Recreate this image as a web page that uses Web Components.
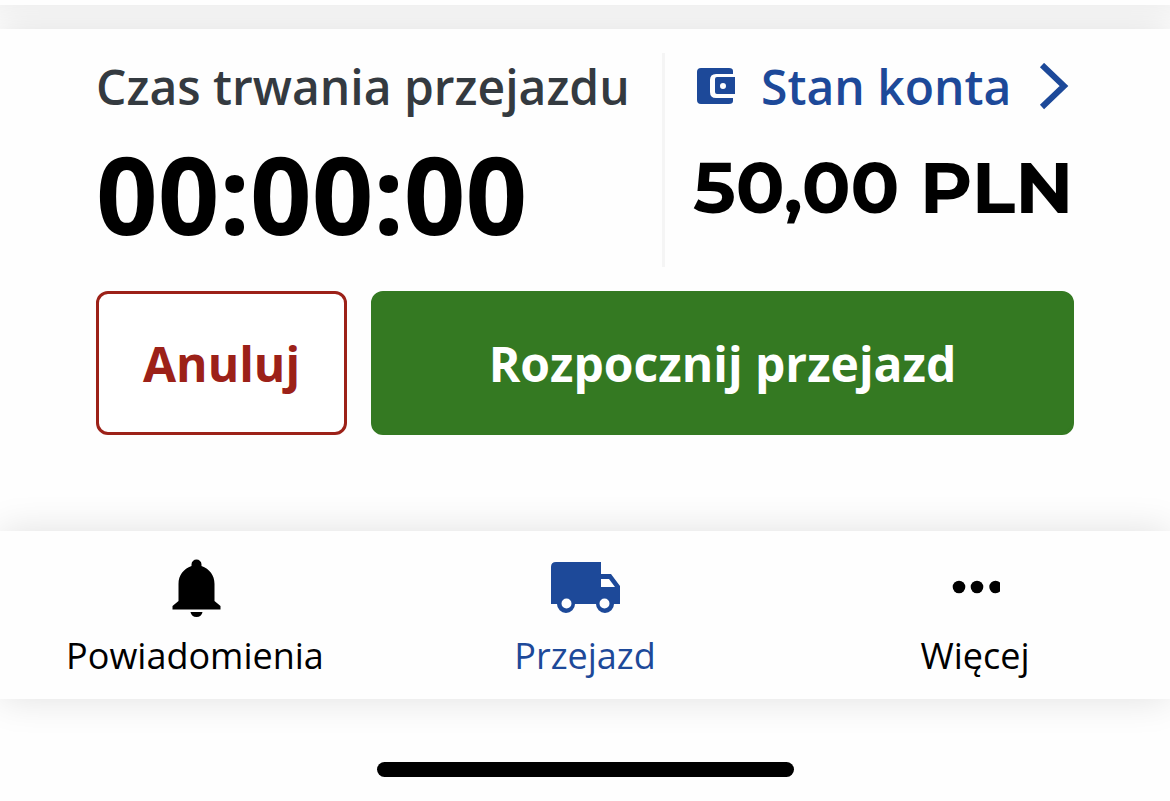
<!DOCTYPE html>
<html lang="pl">
<head>
<meta charset="utf-8">
<meta name="viewport" content="width=device-width, initial-scale=1">
<title>Przejazd</title>
<style>
  :root { --blue: #1d4999; --green: #347922; --red: #9c2118; --shadow: 0 0 36px rgba(0, 0, 0, .12); }
  body { margin: 0; background: #fefefe; color: #000; font-family: "Open Sans", "Noto Sans", sans-serif; overflow-x: hidden; }
</style>
</head>
<body>
<ride-screen></ride-screen>
<script>
const define = (name, html) => {
  const template = document.createElement('template');
  template.innerHTML = html;
  customElements.define(name, class extends HTMLElement {
    constructor() {
      super();
      this.attachShadow({ mode: 'open' }).append(template.content.cloneNode(true));
    }
  });
};

define('icon-wallet', `
<style>:host{display:block;flex:none} svg{display:block}</style>
<svg width="48" height="48" viewBox="0 0 48 48" fill="currentColor" aria-hidden="true">
<path d="M8 5h28q4 0 4 3v3H23q-6 0-6 6v12q0 6 6 6h17v3q0 3-4 3H8q-4 0-4-4V9q0-4 4-4Z"/>
<path fill-rule="evenodd" d="M24 14h18v17H24q-2 0-2-2V16q0-2 2-2Zm6 6a3 3 0 1 0 0 6 3 3 0 0 0 0-6Z"/></svg>`);

define('icon-chevron', `
<style>:host{display:block;flex:none} svg{display:block}</style>
<svg width="36" height="48" viewBox="0 0 36 48" fill="none" stroke="currentColor" stroke-width="6" aria-hidden="true">
<path d="M4 2 26 23 4 44"/></svg>`);

define('icon-bell', `
<style>:host{display:block} svg{display:block}</style>
<svg width="72" height="72" viewBox="0 0 72 72" fill="currentColor" aria-hidden="true">
<path d="M37.500 7.500a5 5 0 0 1 5 5v1.500c8 3 13 9 13 18v17l6 5v3.500h-48V54l6-5V32c0-9 5-15 13-18v-1.500a5 5 0 0 1 5-5Z"/>
<path d="M31.500 60h12q-1 5-6 5t-6-5Z"/></svg>`);

define('icon-truck', `
<style>:host{display:block} svg{display:block}</style>
<svg width="72" height="72" viewBox="0 0 72 72" fill="currentColor" aria-hidden="true">
<path fill-rule="evenodd" d="M7 10h45v12h10l9 12v18h-6a9 9 0 0 1-18 0H26a9 9 0 0 1-18 0H2V15q0-5 5-5Zm45 17v8h14l-6-8ZM17.500 46.500a5 5 0 1 0 0 10 5 5 0 0 0 0-10Zm38 0a5 5 0 1 0 0 10 5 5 0 0 0 0-10Z"/></svg>`);

define('icon-more', `
<style>:host{display:block} svg{display:block}</style>
<svg width="72" height="72" viewBox="0 0 72 72" fill="currentColor" aria-hidden="true">
<circle cx="20" cy="35" r="6.300"/><circle cx="38" cy="35" r="6.300"/><path d="M61 30.500v9a6.300 6.300 0 1 1 0-9Z"/></svg>`);

define('ride-time', `
<style>
  :host{display:block}
  .label{font-size:48px;line-height:68px;font-weight:540;color:#343a40;white-space:nowrap}
  .value{display:block;font-family:"Noto Sans","Open Sans",sans-serif;font-size:108px;line-height:146px;font-weight:700}
</style>
<div class="label"><slot name="label"></slot></div>
<time class="value"><slot></slot></time>`);

define('account-balance', `
<style>
  :host{display:block}
  a{display:flex;align-items:center;gap:20px;color:var(--blue);font-size:48px;line-height:68px;font-weight:540;text-decoration:none;white-space:nowrap}
  icon-chevron{margin-left:auto}
  .value{font-family:Montserrat,Inter,sans-serif;font-size:72px;line-height:88px;margin-top:22px;font-weight:700;white-space:nowrap}
</style>
<a href="#konto"><icon-wallet></icon-wallet><slot name="label"></slot><icon-chevron></icon-chevron></a>
<div class="value"><slot></slot></div>`);

define('ride-button', `
<style>
  :host{display:block}
  button{box-sizing:border-box;display:block;width:100%;height:144px;margin:0;padding:2px 44px 0;border:3px solid var(--red);border-radius:12px;background:#fff;color:var(--red);font:700 48px/64px "Open Sans","Noto Sans",sans-serif;white-space:nowrap}
  :host([primary]) button{background:var(--green);border-color:var(--green);color:#fff}
</style>
<button type="button"><slot></slot></button>`);

define('ride-panel', `
<style>
  :host{display:block;background:#fefefe;padding:24px 96px 96px;box-shadow:var(--shadow)}
  .summary,.actions{display:flex}
  .summary ride-time{flex:1}
  account-balance{width:381px;border-left:3px solid #f5f5f5;padding-left:28px}
  .actions{gap:24px;margin-top:24px}
  .actions ride-button[primary]{flex:1}
</style>
<section class="summary">
  <ride-time><span slot="label">Czas trwania przejazdu</span>00:00:00</ride-time>
  <account-balance><span slot="label">Stan konta</span>50,00 PLN</account-balance>
</section>
<div class="actions">
  <ride-button>Anuluj</ride-button>
  <ride-button primary>Rozpocznij przejazd</ride-button>
</div>`);

define('nav-item', `
<style>
  :host{display:block}
  a{display:flex;flex-direction:column;align-items:center;gap:8px;color:#000;text-decoration:none;font-size:36px;line-height:48px;padding:21px 0 19px}
  :host([active]) a{color:var(--blue)}
</style>
<a href="#"><slot name="icon"></slot><slot></slot></a>`);

define('bottom-nav', `
<style>
  :host{display:block;position:relative;background:#fefefe;box-shadow:var(--shadow)}
  nav{display:grid;grid-template-columns:repeat(3,1fr)}
</style>
<nav>
  <nav-item><icon-bell slot="icon"></icon-bell>Powiadomienia</nav-item>
  <nav-item active><icon-truck slot="icon"></icon-truck>Przejazd</nav-item>
  <nav-item><icon-more slot="icon"></icon-more>Więcej</nav-item>
</nav>`);

define('home-indicator', `
<style>
  :host{display:flex;justify-content:center;padding:63px 0 24px}
  div{width:36%;max-width:417px;height:15px;border-radius:8px;background:#000}
</style>
<div></div>`);

define('ride-screen', `
<style>
  :host{display:block}
  .sheet{height:5px;margin-bottom:24px;background:#fefefe;box-shadow:0 -20px 36px 20px rgba(0,0,0,.09)}
  main{clip-path:inset(-24px 0 0 0)}
</style>
<div class="sheet"></div>
<main><ride-panel></ride-panel></main>
<bottom-nav></bottom-nav>
<home-indicator></home-indicator>`);
</script>
</body>
</html>
